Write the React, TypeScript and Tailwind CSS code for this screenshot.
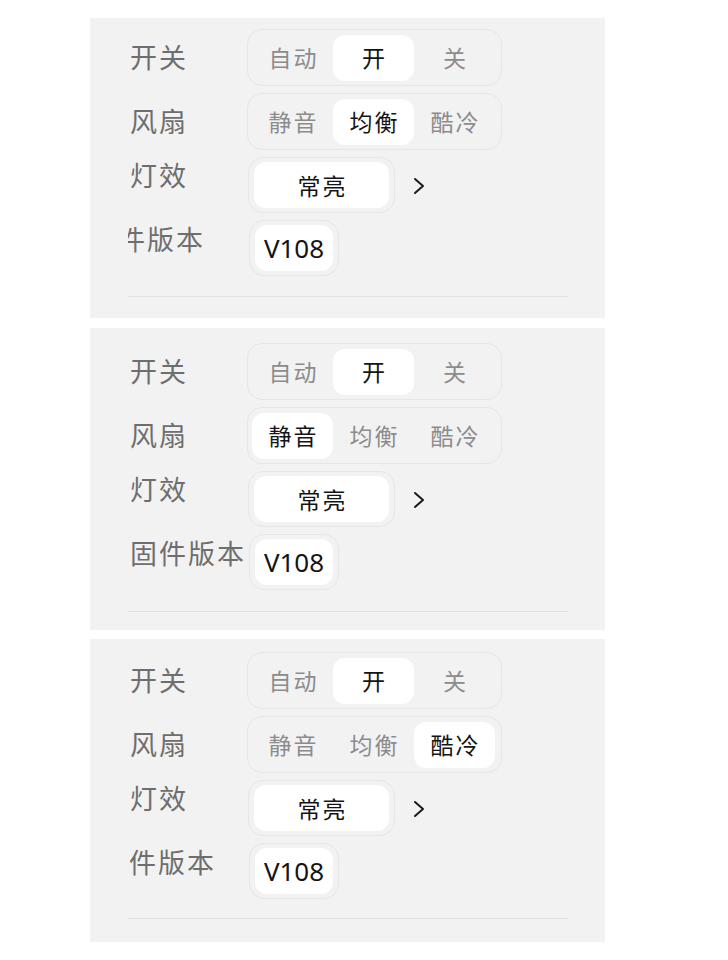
import React from "react";

const CJK = { fontFamily: '"Noto Sans CJK SC", "Noto Sans", sans-serif' };

function Segmented({ options, selected }: { options: string[]; selected: number }) {
  return (
    <div className="flex h-[57px] w-[255px] items-center rounded-[15px] border border-[#e6e6e6] bg-[#f2f2f2] px-[4px]">
      {options.map((o, i) => (
        <div
          key={o}
          className={
            i === selected
              ? "flex h-[46px] w-[81px] items-center justify-center rounded-[12px] bg-white pl-[2px] text-[23px] text-[#141414]"
              : "flex h-[46px] w-[81px] items-center justify-center pl-[2px] text-[23px] text-[#8c8c8c]"
          }
        >
          <span className="tracking-[2px]">{o}</span>
        </div>
      ))}
    </div>
  );
}

function Chevron() {
  return (
    <svg width="14" height="18" viewBox="0 0 14 18" className="ml-[17px] mt-[2px]">
      <polyline points="3,2 11,9 3,16" fill="none" stroke="#1a1a1a" strokeWidth="2" strokeLinecap="round" strokeLinejoin="round" />
    </svg>
  );
}

function Panel({
  fan,
  pt,
  h,
  firmwareShift,
  divTop,
}: {
  fan: number;
  pt: string;
  h: string;
  firmwareShift: string;
  divTop: string;
}) {
  return (
    <div className={`w-[515px] bg-[#f2f2f2] pl-[38px] ${pt} ${h}`} style={CJK}>
      <div className="flex flex-col gap-[7px]">
        <div className="flex items-center">
          <div className="w-[119px] pl-[2px] text-[27px] tracking-[2px] text-[#6e6e6e]">开关</div>
          <Segmented options={["自动", "开", "关"]} selected={1} />
        </div>
        <div className="flex items-center">
          <div className="w-[119px] pl-[2px] text-[27px] tracking-[2px] text-[#6e6e6e]">风扇</div>
          <Segmented options={["静音", "均衡", "酷冷"]} selected={fan} />
        </div>
        <div className="flex items-start">
          <div className="flex h-[36px] w-[120px] items-center pl-[2px] text-[27px] tracking-[2px] text-[#6e6e6e]">灯效</div>
          <div className="flex h-[56px] w-[147px] items-center rounded-[15px] border border-[#e6e6e6] bg-[#f2f2f2] px-[5px]">
            <div className="flex h-[46px] w-full items-center justify-center rounded-[12px] bg-white pl-[2px] text-[23px] text-[#141414]">
              <span className="tracking-[2px]">常亮</span>
            </div>
          </div>
          <div className="flex h-[56px] items-center">
            <Chevron />
          </div>
        </div>
        <div className="flex items-start">
          <div className="flex h-[38px] w-[121px] items-center overflow-hidden whitespace-nowrap text-[27px] tracking-[2px] text-[#6e6e6e]">
            <span className={`shrink-0 ${firmwareShift}`}>固件版本</span>
          </div>
          <div className="flex h-[56px] w-[90px] items-center rounded-[15px] border border-[#e6e6e6] bg-[#f2f2f2] px-[5px]">
            <div
              className="flex h-[46px] w-full items-center justify-center rounded-[12px] bg-white text-[26px] text-[#141414]"
              style={{ fontFamily: '"Noto Sans", sans-serif' }}
            >
              V108
            </div>
          </div>
        </div>
      </div>
      <div className={`mr-[37px] h-px bg-[#e0e0e0] ${divTop}`} />
    </div>
  );
}

export default function App() {
  return (
    <div className="min-h-[960px] bg-white pl-[90px] pt-[18px]">
      <Panel fan={1} pt="pt-[11px]" h="h-[300px]" firmwareShift="ml-[-39px]" divTop="mt-[20px]" />
      <div className="h-[10px]" />
      <Panel fan={0} pt="pt-[15px]" h="h-[302px]" firmwareShift="ml-[2px]" divTop="mt-[21px]" />
      <div className="h-[9px]" />
      <Panel fan={2} pt="pt-[13px]" h="h-[303px]" firmwareShift="ml-[-28px]" divTop="mt-[19px]" />
    </div>
  );
}
